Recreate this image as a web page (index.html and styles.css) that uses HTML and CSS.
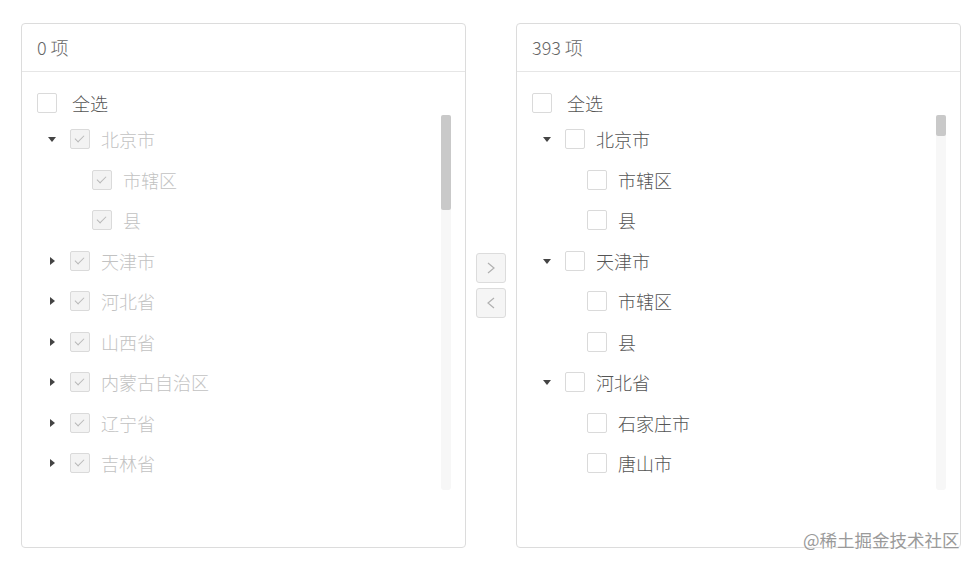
FILE: index.html
```html
<!DOCTYPE html>
<html lang="zh-CN">
<head>
    <meta charset="UTF-8">
    <meta name="viewport" content="width=device-width, initial-scale=1.0">
    <title>Transfer</title>
    <link rel="stylesheet" href="styles.css">
</head>
<body>
    <div class="transfer">
        <div class="panel">
            <div class="panel-header">0 项</div>
            <div class="panel-body">
                <label class="select-all"><span class="checkbox"></span>全选</label>
                <div class="tree-wrap">
                    <div class="tree">
                        <div class="row disabled"><span class="toggle open"></span><span class="checkbox checked"></span>北京市</div>
                        <div class="row disabled child"><span class="toggle"></span><span class="checkbox checked"></span>市辖区</div>
                        <div class="row disabled child"><span class="toggle"></span><span class="checkbox checked"></span>县</div>
                        <div class="row disabled"><span class="toggle closed"></span><span class="checkbox checked"></span>天津市</div>
                        <div class="row disabled"><span class="toggle closed"></span><span class="checkbox checked"></span>河北省</div>
                        <div class="row disabled"><span class="toggle closed"></span><span class="checkbox checked"></span>山西省</div>
                        <div class="row disabled"><span class="toggle closed"></span><span class="checkbox checked"></span>内蒙古自治区</div>
                        <div class="row disabled"><span class="toggle closed"></span><span class="checkbox checked"></span>辽宁省</div>
                        <div class="row disabled"><span class="toggle closed"></span><span class="checkbox checked"></span>吉林省</div>
                    </div>
                    <div class="scrollbar"><div class="thumb thumb-long"></div></div>
                </div>
            </div>
        </div>

        <div class="ops">
            <button class="op-btn" type="button">
                <svg width="8" height="12" viewBox="0 0 8 12"><polyline points="1,1 7,6 1,11" /></svg>
            </button>
            <button class="op-btn" type="button">
                <svg width="8" height="12" viewBox="0 0 8 12"><polyline points="7,1 1,6 7,11" /></svg>
            </button>
        </div>

        <div class="panel">
            <div class="panel-header">393 项</div>
            <div class="panel-body">
                <label class="select-all"><span class="checkbox"></span>全选</label>
                <div class="tree-wrap">
                    <div class="tree">
                        <div class="row"><span class="toggle open"></span><span class="checkbox"></span>北京市</div>
                        <div class="row child"><span class="toggle"></span><span class="checkbox"></span>市辖区</div>
                        <div class="row child"><span class="toggle"></span><span class="checkbox"></span>县</div>
                        <div class="row"><span class="toggle open"></span><span class="checkbox"></span>天津市</div>
                        <div class="row child"><span class="toggle"></span><span class="checkbox"></span>市辖区</div>
                        <div class="row child"><span class="toggle"></span><span class="checkbox"></span>县</div>
                        <div class="row"><span class="toggle open"></span><span class="checkbox"></span>河北省</div>
                        <div class="row child"><span class="toggle"></span><span class="checkbox"></span>石家庄市</div>
                        <div class="row child"><span class="toggle"></span><span class="checkbox"></span>唐山市</div>
                    </div>
                    <div class="scrollbar"><div class="thumb thumb-short"></div></div>
                </div>
            </div>
        </div>
    </div>

    <div class="watermark">@稀土掘金技术社区</div>
</body>
</html>
```

FILE: styles.css
```css
body {
    margin: 0;
    background-color: #fff;
    font-family: "Noto Sans CJK SC", "Noto Sans", sans-serif;
    font-size: 18px;
    font-weight: 300;
    color: #555;
}
.transfer {
    display: flex;
    align-items: center;
    padding: 23px 0 0 21px;
}
.panel {
    width: 445px;
    height: 525px;
    box-sizing: border-box;
    border: 1px solid #dcdcdc;
    border-radius: 4px;
    overflow: hidden;
}
.panel-header {
    height: 48px;
    box-sizing: border-box;
    border-bottom: 1px solid #e6e6e6;
    padding: 0 0 2px 15px;
    display: flex;
    align-items: center;
    color: #666;
    font-size: 18px;
}
.panel-body {
    padding: 19px 14px 0 0;
}
.select-all {
    display: flex;
    align-items: center;
    height: 24px;
    padding-left: 15px;
}
.select-all .checkbox {
    margin-right: 15px;
}
.tree-wrap {
    display: flex;
    height: 375px;
}
.tree {
    flex: 1;
    padding-top: 4px;
    overflow: hidden;
}
.scrollbar {
    width: 10px;
    background-color: #f7f7f7;
    border-radius: 3px;
}
.thumb {
    background-color: #c9c9c9;
    border-radius: 2px;
}
.thumb-long {
    height: 95px;
}
.thumb-short {
    height: 21px;
}
.row {
    display: flex;
    align-items: center;
    height: 40.5px;
    padding-left: 22px;
    white-space: nowrap;
}
.row.child {
    padding-left: 44px;
}
.row .checkbox {
    margin: 0 11px 0 10px;
}
.row.disabled {
    color: #c2c2c2;
}
.toggle {
    width: 16px;
    height: 16px;
    position: relative;
    flex-shrink: 0;
}
.toggle.open::after {
    content: "";
    position: absolute;
    left: 4px;
    top: 6px;
    border-left: 4px solid transparent;
    border-right: 4px solid transparent;
    border-top: 5px solid #444;
}
.toggle.closed::after {
    content: "";
    position: absolute;
    left: 6px;
    top: 4px;
    border-top: 4px solid transparent;
    border-bottom: 4px solid transparent;
    border-left: 5px solid #444;
}
.checkbox {
    display: inline-block;
    width: 20px;
    height: 20px;
    box-sizing: border-box;
    border: 1px solid #dadada;
    border-radius: 2px;
    background-color: #fff;
    flex-shrink: 0;
    position: relative;
}
.checkbox.checked {
    background-color: #f3f3f3;
}
.checkbox.checked::after {
    content: "";
    position: absolute;
    left: 6px;
    top: 3px;
    width: 4px;
    height: 8px;
    border-right: 1.5px solid #b8b8b8;
    border-bottom: 1.5px solid #b8b8b8;
    transform: rotate(45deg);
}
.ops {
    display: flex;
    flex-direction: column;
    gap: 5px;
    margin: 0 10px;
}
.op-btn {
    width: 30px;
    height: 30px;
    padding: 0;
    border: 1px solid #dcdcdc;
    border-radius: 3px;
    background-color: #f5f5f5;
    display: flex;
    align-items: center;
    justify-content: center;
}
.op-btn svg polyline {
    fill: none;
    stroke: #b0b0b0;
    stroke-width: 1.2;
}
.watermark {
    position: absolute;
    left: 803px;
    top: 527px;
    font-size: 17.5px;
    font-weight: 400;
    color: #9a9a9a;
    text-shadow: 0 0 2px #fff, 0 0 2px #fff;
    white-space: nowrap;
}
```
